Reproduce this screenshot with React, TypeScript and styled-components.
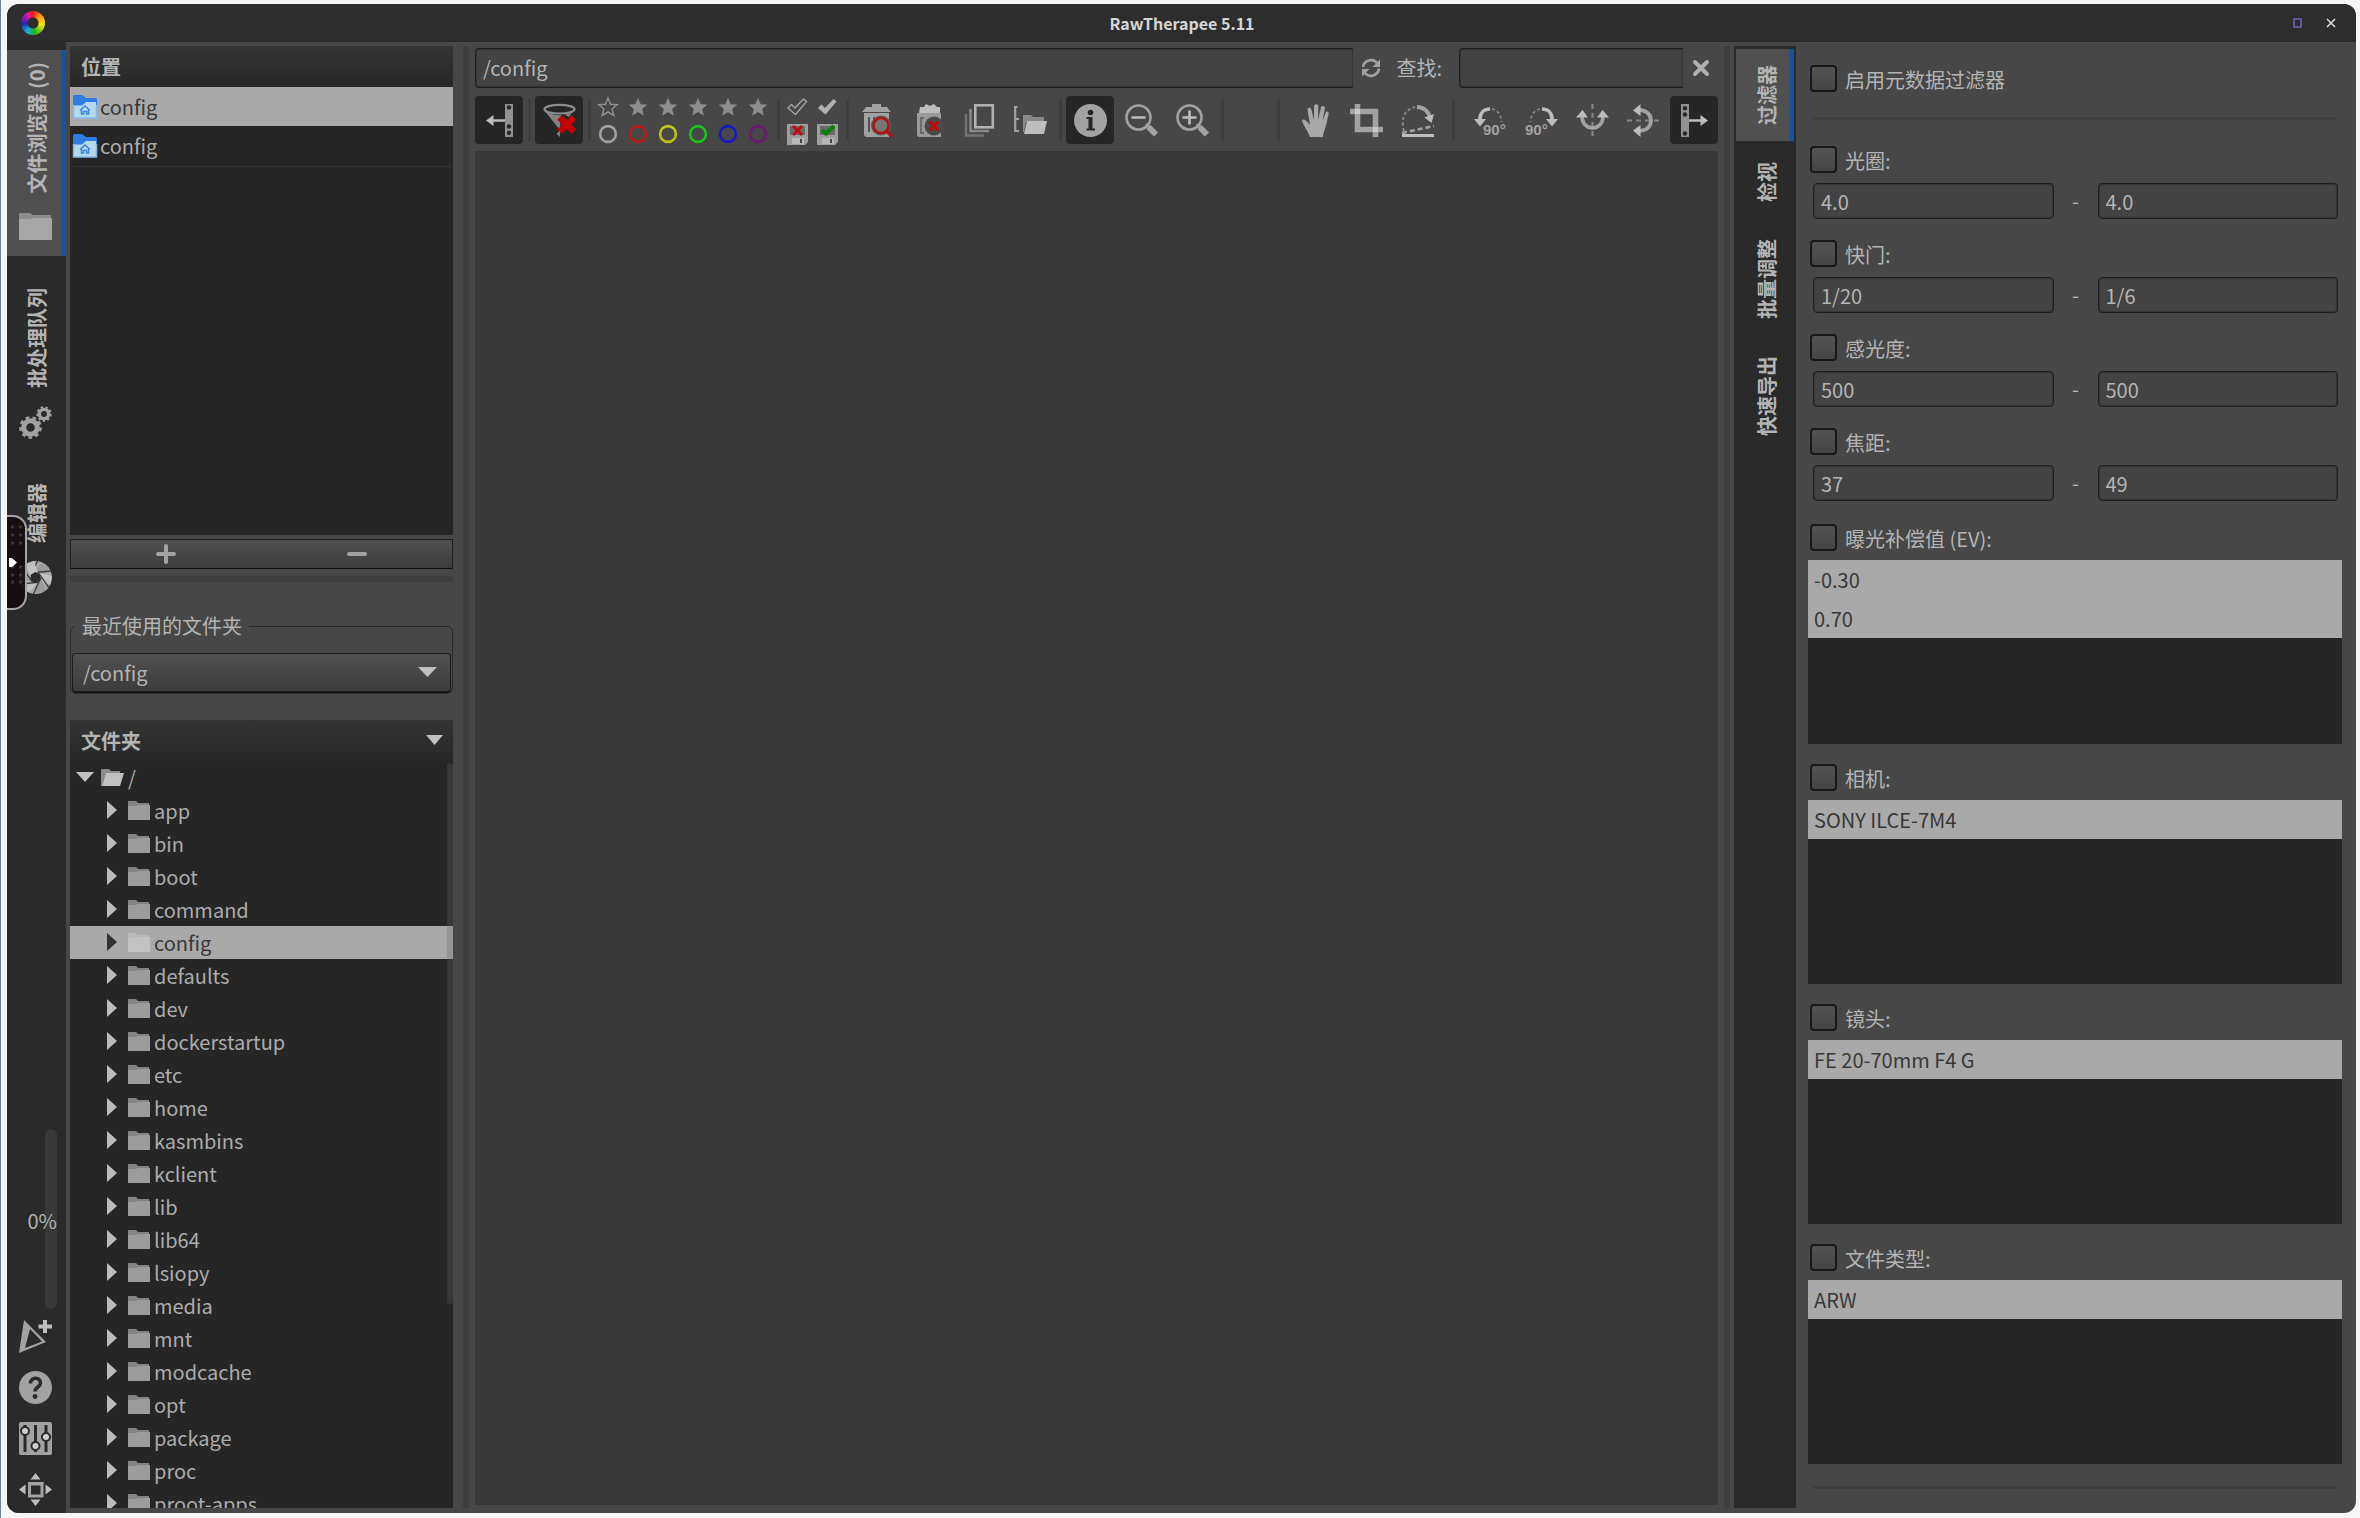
import React from "react";
import styled, { createGlobalStyle, css } from "styled-components";

const GlobalStyle = createGlobalStyle`
  * { box-sizing: border-box; }
  html, body, #root { height: 100%; }
  body {
    margin: 0;
    background: #f6f6f7;
    color: #b4b4b4;
    font: 20px/30px "Noto Sans CJK SC", "Noto Sans", sans-serif;
  }
  button, input, select { font: inherit; color: inherit; }
  ul { margin: 0; padding: 0; list-style: none; }
`;

/* ---------- frame ---------- */

const Desktop = styled.div`
  height: 100vh;
  padding: 4px 4px 5px 6px;
  border-left: 1px solid #6f8296;
`;

const Window = styled.div`
  position: relative;
  height: 100%;
  display: flex;
  flex-direction: column;
  overflow: hidden;
  border-radius: 12px;
  background: #474747;
`;

const TitleBar = styled.header`
  display: grid;
  grid-template-columns: 1fr auto 1fr;
  align-items: center;
  flex: none;
  height: 38px;
  padding: 0 13px 0 14px;
  background: #2d2d2d;
  border-bottom: 1px solid #292929;
`;

const Title = styled.h1`
  margin: 0;
  font-size: 16px;
  line-height: 30px;
  font-weight: 700;
  color: #d6d6d6;
`;

const Wheel = styled.div`
  width: 24px;
  height: 24px;
  border-radius: 50%;
  background:
    radial-gradient(circle, #2d2d2d 5px, transparent 6px),
    conic-gradient(#f01818, #ff9a10 45deg, #f8e808 100deg, #20b418 170deg, #18b0e0 215deg, #2020b0 265deg, #9018b0 300deg, #e81898 330deg, #f01818);
`;

const WindowControls = styled.div`
  display: flex;
  justify-content: flex-end;
  gap: 10px;
`;

const WindowButton = styled.button`
  display: grid;
  place-items: center;
  width: 24px;
  height: 24px;
  padding: 0;
  border: 0;
  background: none;
`;

const Body = styled.div`
  flex: 1;
  min-height: 0;
  display: flex;
`;

/* ---------- left rail ---------- */

const Rail = styled.nav`
  display: flex;
  flex-direction: column;
  flex: none;
  width: 59px;
  padding: 8px 0 7px;
  background: #2a2a2a;
`;

const RailTabs = styled.div`
  display: flex;
  flex-direction: column;
  gap: 20px;
`;

const verticalText = css`
  writing-mode: vertical-rl;
  text-orientation: sideways;
  rotate: 180deg;
  font-weight: 700;
  white-space: nowrap;
`;

const RailTab = styled.button<{ $active?: boolean }>`
  display: flex;
  flex-direction: column;
  align-items: center;
  gap: 18px;
  padding: 12px 0 12px 3px;
  border: 0;
  border-right: 5px solid ${(p) => (p.$active ? "#15539e" : "transparent")};
  background: ${(p) => (p.$active ? "#505050" : "transparent")};
`;

const RailLabel = styled.span`
  ${verticalText}
  margin-left: 2px;
`;

const RailFoot = styled.div`
  display: flex;
  flex-direction: column;
  align-items: center;
  gap: 18px;
  margin-top: auto;
  padding-right: 2px;
`;

const Progress = styled.div`
  position: relative;
  align-self: flex-end;
  width: 12px;
  height: 180px;
  margin: 0 7px -7px 0;
  border-radius: 6px;
  background: #383838;
`;

const ProgressText = styled.span`
  position: absolute;
  right: 0;
  top: 77px;
`;

const IconButton = styled.button`
  display: grid;
  place-items: center;
  padding: 0;
  border: 0;
  background: none;
`;

const EdgeHandle = styled.button`
  position: absolute;
  left: 0;
  top: 511px;
  width: 20px;
  height: 95px;
  padding: 0;
  border: 2px solid #a8a4a4;
  border-left: 0;
  border-radius: 0 14px 14px 0;
  background: rgba(20, 14, 14, 0.94);
`;

/* ---------- left panel ---------- */

const SidePanel = styled.aside`
  display: flex;
  flex-direction: column;
  flex: none;
  width: 392px;
  padding: 4px 5px 5px 4px;
`;

const ListHeader = styled.div`
  display: flex;
  align-items: center;
  justify-content: space-between;
  flex: none;
  height: 41px;
  padding: 0 10px 0 11px;
  font-weight: 700;
  background: linear-gradient(#343434, #282828);
`;

const Places = styled.div`
  height: 489px;
  background: #262626;
`;

const PlaceRow = styled.li<{ $selected?: boolean }>`
  display: flex;
  align-items: center;
  gap: 3px;
  height: 39px;
  padding-left: 3px;
  color: ${(p) => (p.$selected ? "#383838" : "#acacac")};
  background: ${(p) => (p.$selected ? "#a9a9a9" : "transparent")};
`;

const PlacesLine = styled.hr`
  height: 1px;
  margin: 1px 2px 0 3px;
  border: 0;
  background: #343434;
`;

const ButtonPair = styled.div`
  display: grid;
  grid-template-columns: 1fr 1fr;
  height: 30px;
  margin-top: 4px;
  border: 1px solid #1f1f1f;
  border-bottom-color: #101010;
  background: linear-gradient(#505050, #3d3d3d);
`;

const PanedHandle = styled.div`
  flex: none;
  height: 6px;
  margin-top: 7px;
  background: #3e3e3e;
`;

const Recent = styled.fieldset`
  min-width: 0;
  margin: 29px 0 0;
  padding: 12px 1px 0;
  border: 1px solid #2a2a2a;
  border-radius: 6px;
`;

const RecentLegend = styled.legend`
  margin-left: 3px;
  padding: 0 7px;
`;

const SelectBox = styled.div`
  display: grid;
  grid-template-columns: 1fr 19px;
  align-items: center;
  height: 40px;
  border: 1px solid #1e1e1e;
  border-bottom: 2px solid #161616;
  border-radius: 4px;
  background: linear-gradient(#505050, #3c3c3c);
  padding-right: 13px;
`;

const Select = styled.select`
  grid-area: 1 / 1 / 2 / 3;
  appearance: none;
  height: 37px;
  padding: 0 10px;
  border: 0;
  outline: 0;
  background: none;
`;

const SelectArrow = styled.span`
  grid-area: 1 / 2;
  display: grid;
  pointer-events: none;
`;

const Tree = styled.div`
  position: relative;
  display: flex;
  flex-direction: column;
  flex: 1;
  min-height: 0;
  margin-top: 26px;
  overflow: hidden;
  background: #262626;
`;

const TreeRow = styled.li<{ $root?: boolean; $selected?: boolean }>`
  display: flex;
  align-items: center;
  height: 33px;
  gap: ${(p) => (p.$root ? "7px" : "11px")};
  padding-left: ${(p) => (p.$root ? "6px" : "37px")};
  color: ${(p) => (p.$selected ? "#383838" : "#acacac")};
  background: ${(p) => (p.$selected ? "#a9a9a9" : "transparent")};
`;

const TreeItem = styled.span`
  display: flex;
  align-items: center;
  gap: 4px;
`;

const ScrollThumb = styled.div`
  position: absolute;
  right: 0;
  top: 43px;
  width: 6px;
  height: 541px;
  border-radius: 3px;
  background: rgba(100, 100, 100, 0.28);
`;

const ColumnHandle = styled.div`
  flex: none;
  width: 6px;
  margin: 4px 5px 5px;
  background: #3e3e3e;
`;

/* ---------- centre ---------- */

const Center = styled.main`
  display: flex;
  flex-direction: column;
  flex: 1;
  min-width: 0;
  padding: 6px 1px 8px;
`;

const PathBar = styled.div`
  display: flex;
  align-items: center;
  height: 40px;
`;

const entry = css`
  min-width: 0;
  border: 1px solid #1e1e1e;
  outline: 0;
  background: #434343;
  box-shadow: inset 0 0 1px 1px #363636;
`;

const PathInput = styled.input`
  ${entry}
  flex: 1;
  height: 40px;
  padding: 0 7px 1px;
  border-right: 0;
  border-radius: 4px 0 0 4px;
`;

const SearchInput = styled(PathInput)`
  flex: none;
  width: 224px;
`;

const BarButton = styled(IconButton)`
  width: 35px;
  height: 36px;
`;

const SearchLabel = styled.label`
  padding: 0 17px 0 8px;
`;

const Toolbar = styled.div`
  display: flex;
  height: 48px;
  margin: 8px 0 7px;
`;

const ToolSeparator = styled.span<{ $wide?: boolean }>`
  width: 3px;
  margin: ${(p) => (p.$wide ? "3px 11px" : "3px 4px 3px 5px")};
  background: #3e3e3e;
`;

const ToolGap = styled.span`
  flex: 1;
`;

const ToolGroup = styled.div`
  display: flex;
  gap: 3px;
`;

const ToolButton = styled(IconButton)<{ $on?: boolean }>`
  width: 48px;
  height: 48px;
  border-radius: 4px;
  background: ${(p) => (p.$on ? "#262626" : "transparent")};
`;

const MiniGrid = styled.div<{ $columns: number }>`
  display: grid;
  grid-template-columns: repeat(${(p) => p.$columns}, 30px);
  grid-template-rows: 22px 32px;
  margin: 0 -1px 0 -2px;
`;

const Canvas = styled.section`
  flex: 1;
  background: #383838;
`;

/* ---------- right side ---------- */

const Strip = styled.nav`
  display: flex;
  flex-direction: column;
  gap: 5px;
  flex: none;
  width: 62px;
  margin: 4px 0 5px -1px;
  padding: 3px 2px 0;
  background: #2a2a2a;
`;

const StripTab = styled.button<{ $active?: boolean }>`
  display: grid;
  place-items: center;
  padding: 16px 0 16px 8px;
  border: 0;
  border-right: 5px solid ${(p) => (p.$active ? "#15539e" : "transparent")};
  background: ${(p) => (p.$active ? "#505050" : "transparent")};
`;

const StripLabel = styled.span`
  ${verticalText}
`;

const Filters = styled.aside`
  flex: none;
  width: 560px;
  padding: 23px 14px 0 12px;
`;

const CheckLabel = styled.label`
  display: flex;
  align-items: center;
  gap: 8px;
  height: 27px;
  padding-left: 2px;
`;

const MasterCheck = styled(CheckLabel)`
  margin-bottom: 25px;
`;

const CheckText = styled.span`
  padding-top: 2px;
`;

const Check = styled.input`
  appearance: none;
  width: 27px;
  height: 27px;
  margin: 0;
  border: 2px solid #181818;
  border-radius: 4px;
  background: linear-gradient(#535353, #454545);
`;

const Rule = styled.hr`
  height: 3px;
  margin: 22px 5px 26px;
  border: 0;
  background: #3f3f3f;
`;

const Ranges = styled.div`
  padding-bottom: 2px;
`;

const RangeGroup = styled.div`
  height: 94px;
`;

const Range = styled.div`
  display: grid;
  grid-template-columns: 1fr 44px 1fr;
  align-items: center;
  text-align: center;
  padding: 10px 4px 0 5px;
`;

const RangeInput = styled.input`
  ${entry}
  height: 36px;
  padding: 0 7px;
  border-radius: 4px;
`;

const ValueList = styled.ul`
  height: 184px;
  margin: 9px 0 20px;
  background: #262626;
`;

const Value = styled.li`
  height: 39px;
  padding: 5px 6px;
  line-height: 30px;
  color: #383838;
  background: #a9a9a9;
`;

/* ---------- icons ---------- */

const G = "#a2a2a2";
const L = "#bdbdbd";

const Svg = styled.svg`
  display: block;
  overflow: visible;
`;

type IconProps = { size?: number; w?: number; h?: number; children: React.ReactNode };
const Icon = ({ size = 33, w, h, children }: IconProps) => (
  <Svg width={w ?? size} height={h ?? size} viewBox={`0 0 ${w ?? size} ${h ?? size}`} fill="none" aria-hidden="true">
    {children}
  </Svg>
);

const Down = ({ w = 19 }: { w?: number }) => (
  <Icon w={w} h={11}>
    <path d={`M0 0H${w}L${w / 2} 10Z`} fill="#c0c0c0" />
  </Icon>
);

const Right = ({ dark }: { dark?: boolean }) => (
  <Icon w={10} h={19}>
    <path d="M0 0V18L10 9Z" fill={dark ? "#333" : "#bcbcbc"} />
  </Icon>
);

const Folder = ({ light }: { light?: boolean }) => (
  <Icon w={22} h={19}>
    <path d="M0 0H8L10 2H21V5H0Z" fill={light ? "#b8b8b8" : "#848484"} />
    <path d="M0 5H8L10 4H22V19H0Z" fill={light ? "#c2c2c2" : "#9c9c9c"} />
  </Icon>
);

const FolderOpen = () => (
  <Icon w={23} h={18}>
    <path d="M0 0H8L10 2H19V5H5L1 17H0Z" fill="#8a8a8a" />
    <path d="M5 4H23L19 17H1Z" fill="#c0c0c0" />
  </Icon>
);

const HomeFolder = () => (
  <Icon size={24}>
    <path d="M0 1.500Q0 0 1.500 0H9L13 3H22.500Q24 3 24 4.500V14H0Z" fill="#2f7de0" />
    <path d="M1 10.500H9L13 7H23V23H1Z" fill="#b4d9ec" />
    <path d="M0.500 10V23H23.500V10" stroke="#86b6ec" strokeWidth="1.500" />
    <path d="M7 15.500L12 11L17 15.500M8.500 14.500V19H10.500V16.500H13.500V19H15.500V14.500" stroke="#3f87dd" strokeWidth="1.500" />
  </Icon>
);

const BigFolder = () => (
  <Icon>
    <path d="M0 2H11L14 4H32V9H0Z" fill="#8c8c8c" />
    <path d="M0 8H11L14 7H33V29H0Z" fill="#a6a6a6" />
  </Icon>
);

const Gear = ({ cx, cy, r }: { cx: number; cy: number; r: number }) => (
  <g>
    <circle cx={cx} cy={cy} r={r * 0.62} stroke={G} strokeWidth={r * 0.46} />
    <circle cx={cx} cy={cy} r={r * 0.92} stroke={G} strokeWidth={r * 0.22} strokeDasharray={`${r * 0.34} ${r * 0.302}`} />
  </g>
);

const Gears = () => (
  <Icon>
    <Gear cx={11.5} cy={21.5} r={11} />
    <Gear cx={25} cy={8} r={7.5} />
  </Icon>
);

const Aperture = () => (
  <Icon>
    <circle cx="16.500" cy="16.500" r="16.500" fill="#a8a8a8" />
    {[0, 60, 120, 180, 240, 300].map((a) => (
      <g key={a} transform={`rotate(${a} 16.5 16.5)`}>
        <path d="M14 11.500L23 1.500L30 7L22 16Z" fill={a % 120 ? "#c2c2c2" : "#9b9b9b"} />
        <path d="M11 16.500L18.500 0" stroke="#3c3c3c" strokeWidth="1.300" />
      </g>
    ))}
    <path d="M16.500 11L21.300 13.800V19.200L16.500 22L11.700 19.200V13.800Z" fill="#2a2a2a" />
  </Icon>
);

const AddProfile = () => (
  <Icon>
    <path fillRule="evenodd" d="M5 0L27 22L0 33ZM11 9L6 28L23 21.500Z" fill={G} />
    <path d="M26 0V13M19.500 6.500H33" stroke={L} strokeWidth="4" />
  </Icon>
);

const Help = () => (
  <Icon>
    <circle cx="16.500" cy="16.500" r="16.500" fill={G} />
    <path d="M11.500 12.500C11.500 5.500 21.500 5.500 21.500 12C21.500 16 16 16 16 20.500" stroke="#2a2a2a" strokeWidth="3.600" />
    <circle cx="16" cy="25.500" r="2.400" fill="#2a2a2a" />
  </Icon>
);

const Sliders = () => (
  <Icon>
    <rect width="33" height="33" rx="2" fill={G} />
    <path d="M6 3V30M16.500 3V30M27 3V30" stroke="#2a2a2a" strokeWidth="3" />
    {[[6, 9], [16.5, 24], [27, 15]].map(([x, y]) => (
      <circle key={x} cx={x} cy={y} r="4" fill="#cfcfcf" stroke="#2a2a2a" strokeWidth="2" />
    ))}
  </Icon>
);

const Fullscreen = () => (
  <Icon>
    <path d="M11.500 6.500L16.500 0L21.500 6.500ZM11.500 26.500L16.500 33L21.500 26.500ZM6.500 11.500L0 16.500L6.500 21.500ZM26.500 11.500L33 16.500L26.500 21.500Z" fill={L} />
    <rect x="10.500" y="11" width="12.500" height="12" stroke={G} strokeWidth="3" />
    <path d="M9 10.500H24.500" stroke={G} strokeWidth="3" />
  </Icon>
);

const PanelToggle = ({ right }: { right?: boolean }) => (
  <Icon>
    <g transform={right ? "rotate(180 16.5 16.5)" : undefined}>
      <rect x="22" y="0" width="8" height="33" fill="#909090" />
      <circle cx="26" cy="3.500" r="2.200" fill="#262626" />
      <circle cx="26" cy="22.500" r="2.200" fill="#262626" />
      <circle cx="26" cy="28.800" r="2.200" fill="#262626" />
      <path d="M10 16.500H22" stroke={L} strokeWidth="2.600" />
      <path d="M3 16.500L10.500 11V22Z" fill={L} />
    </g>
  </Icon>
);

const FilterClear = () => (
  <Icon>
    <path d="M0 5Q8 12 18 11L17 26ZM22 11L30 7L26 13ZM13.500 30L17 26V33Z" fill="#828282" />
    <ellipse cx="16.500" cy="5.200" rx="15" ry="4.300" fill="#262626" stroke="#8c8c8c" strokeWidth="2.200" />
    <path d="M16.500 13.500L31 27.500M31 13.500L16.500 27.500" stroke="#c60000" strokeWidth="6.500" />
  </Icon>
);

const starPath = "M10 1L12.600 7.200L19 7.700L14.100 12L15.700 18.500L10 15L4.300 18.500L5.900 12L1 7.700L7.400 7.200Z";
const Star = ({ outline }: { outline?: boolean }) => (
  <Icon size={20}>
    <path d={starPath} fill={outline ? "none" : "#8e8e8e"} stroke="#8e8e8e" strokeWidth={outline ? 1.5 : 0.2} />
  </Icon>
);

const Ring = ({ color }: { color: string }) => (
  <Icon size={20}>
    <circle cx="10" cy="10" r="7.900" stroke={color} strokeWidth="2.600" />
  </Icon>
);

const Tick = ({ outline }: { outline?: boolean }) => (
  <Icon size={20}>
    <path
      d="M1 11L4.500 7.500L8 11L16.500 2L19.500 4.500L8.500 17.500Z"
      fill={outline ? "none" : "#b0b0b0"}
      stroke="#a2a2a2"
      strokeWidth={outline ? 1.4 : 0.2}
    />
  </Icon>
);

const Floppy = ({ yes }: { yes?: boolean }) => (
  <Icon size={21}>
    <path d="M0 0H21V18L18 21H0Z" fill="#9e9e9e" />
    <path d="M3 2H18V11H3Z" fill="#6a6a6a" />
    <path d="M5 14H17V20H5Z" fill="#b8b8b8" />
    <path d="M13 15H15V19H13Z" fill="#474747" />
    {yes ? (
      <path d="M5 6L9 9.500L17 2" stroke="#0b7d0b" strokeWidth="4" />
    ) : (
      <path d="M6 2L15 11M15 2L6 11" stroke="#b81010" strokeWidth="3" />
    )}
  </Icon>
);

const TrashSearch = () => (
  <Icon>
    <path d="M11 0H20V3H26L30 8H1L5 3H11Z" fill={G} />
    <path d="M3 9H28V33H6Q3 33 3 30Z" fill={G} />
    <path d="M8 13V28M13 13V28" stroke="#555" strokeWidth="2" />
    <circle cx="20" cy="21.500" r="10" fill="#5c5c5c" />
    <circle cx="20" cy="21.500" r="7.500" fill="#777" stroke="#b51212" strokeWidth="2.600" />
    <path d="M25 27L31 32.500" stroke="#b51212" strokeWidth="3.200" />
  </Icon>
);

const TrashDelete = () => (
  <Icon>
    <path d="M7 9L8 3L12 3L14 0L18 2L22 0L25 3L28 3V9Z" fill={L} />
    <path d="M5 9H29V33H8Q5 33 5 30Z" fill="#999" />
    <path d="M12 14H9V29H12" stroke="#666" strokeWidth="1.800" />
    <circle cx="22" cy="22" r="9.500" fill="#4b4b4b" />
    <path d="M17.500 17.500L26.500 26.500M26.500 17.500L17.500 26.500" stroke="#c40808" strokeWidth="3" />
  </Icon>
);

const Copies = () => (
  <Icon>
    <path d="M3 10V31.500H21" stroke="#747474" strokeWidth="2.400" />
    <path d="M7.500 5V27H26" stroke="#8a8a8a" strokeWidth="2.400" />
    <rect x="12.300" y="1.300" width="17.500" height="22" stroke="#b0b0b0" strokeWidth="2.600" />
  </Icon>
);

const FolderTree = () => (
  <Icon>
    <path d="M3.500 3H1.200V27H5M1.500 15H5" stroke={G} strokeWidth="2.200" />
    <path d="M9 11H17L19 13H30V18H12L10 28H9Z" fill="#8a8a8a" />
    <path d="M13 17H33L30 30H10Z" fill={L} />
  </Icon>
);

const Info = () => (
  <Icon>
    <circle cx="16.500" cy="16.500" r="16.500" fill={G} />
    <circle cx="16.500" cy="8.500" r="2.800" fill="#262626" />
    <path d="M12.500 13H18.500V24.500H21V26.500H12.500V24.500H14.500V15H12.500Z" fill="#262626" />
  </Icon>
);

const Zoom = ({ plus }: { plus?: boolean }) => (
  <Icon>
    <path d="M21 20L25 24" stroke={G} strokeWidth="3" />
    <path d="M23.500 23L31 30.500" stroke={G} strokeWidth="6" />
    <circle cx="13.500" cy="13.500" r="12" stroke={G} strokeWidth="2.600" />
    <path d={plus ? "M6.500 13.500H20.500M13.500 6.500V20.500" : "M6.500 13.500H20.500"} stroke={L} strokeWidth="2.600" />
  </Icon>
);

const Hand = () => (
  <Icon>
    <path d="M11 33C9 27 5 23 3 17C4 14 7 16 11 21L8.500 6C9 2.500 12 3 12.500 6L15 16L15 2C16 -0.500 19 0 19.300 2L19 16L22 3.500C23 1 26.300 2 25.800 4.500L23.500 17L26.500 9C27.500 6.500 30.300 7.500 29.600 10C28 17 27 22 25.500 26C24.500 29 24 31 24 33Z" fill="#a8a8a8" />
  </Icon>
);

const Crop = () => (
  <Icon>
    <path d="M7.500 0V25.500H33" stroke={G} strokeWidth="5.600" />
    <path d="M0 7.500H25.500V33" stroke={G} strokeWidth="5.600" />
    <path d="M5 5H10V10H5ZM23 23H28V28H23Z" fill="#cacaca" />
  </Icon>
);

const Straighten = () => (
  <Icon>
    <path d="M1 31.500H33" stroke={L} strokeWidth="3" />
    <path d="M1 29L33 22" stroke={G} strokeWidth="2.600" strokeDasharray="5 3" />
    <path d="M3 27C-1 13 5 5 14 3" stroke="#8a8a8a" strokeWidth="2" strokeDasharray="3 2.500" />
    <path d="M16 3C23 3 28 8 29 14" stroke={G} strokeWidth="4" />
    <path d="M23.500 13.500L33 10L30.500 19Z" fill={L} />
  </Icon>
);

const Rotate90 = ({ right }: { right?: boolean }) => (
  <Icon>
    <g transform={right ? "translate(33 0) scale(-1 1)" : undefined}>
      <path d="M16 5C10 5 6 9 6 15" stroke={L} strokeWidth="3.600" />
      <path d="M0 15H12L6 22.500Z" fill={L} />
      <path d="M18 5C24 6 27 11 27.500 18" stroke="#858585" strokeWidth="1.800" strokeDasharray="3 2.500" />
    </g>
    <text x={right ? 0 : 9} y="31" fontSize="15" fontWeight="700" fontFamily="Liberation Sans, sans-serif" fill={G}>
      90°
    </text>
  </Icon>
);

const MirrorArc = () => (
  <>
    <path d="M16.500 0V33" stroke="#858585" strokeWidth="2.200" strokeDasharray="5 4" />
    <path d="M6 12C6 28 27 28 27 12" stroke={G} strokeWidth="3.800" />
    <path d="M0 13.500L6.500 6L12 13.500ZM21 13.500L26.500 6L33 13.500Z" fill={L} />
  </>
);

const FlipH = () => (
  <Icon>
    <MirrorArc />
  </Icon>
);

const FlipV = () => (
  <Icon>
    <g transform="rotate(-90 16.5 16.5)">
      <MirrorArc />
    </g>
  </Icon>
);

const Refresh = () => (
  <Icon size={20}>
    <path d="M2 9C3 2 12 0 16 5M18 10.500C17 18 8 20 4 15" stroke={G} strokeWidth="2.600" />
    <path d="M19 1.500V9H11.500ZM1 18.500V11H8.500Z" fill={G} />
  </Icon>
);

/* ---------- data ---------- */

const folders = [
  "app", "bin", "boot", "command", "config", "defaults", "dev", "dockerstartup", "etc", "home", "kasmbins",
  "kclient", "lib", "lib64", "lsiopy", "media", "mnt", "modcache", "opt", "package", "proc", "proot-apps",
];
const ringColors: [string, string][] = [
  ["无", "#a0a0a0"], ["红", "#bf1a1a"], ["黄", "#c2c214"], ["绿", "#18c218"], ["蓝", "#1717c0"], ["紫", "#6f186f"],
];
const ranges = [
  ["光圈:", "4.0", "4.0"],
  ["快门:", "1/20", "1/6"],
  ["感光度:", "500", "500"],
  ["焦距:", "37", "49"],
];
const lists: [string, string[]][] = [
  ["曝光补偿值 (EV):", ["-0.30", "0.70"]],
  ["相机:", ["SONY ILCE-7M4"]],
  ["镜头:", ["FE 20-70mm F4 G"]],
  ["文件类型:", ["ARW"]],
];

export default function App() {
  return (
    <Desktop>
      <GlobalStyle />
      <Window>
        <TitleBar>
          <Wheel />
          <Title>RawTherapee 5.11</Title>
          <WindowControls>
            <WindowButton aria-label="最大化">
              <Icon w={9} h={10}><path d="M1 1H8V9H1Z" stroke="#6a62b8" strokeWidth="1.600" /></Icon>
            </WindowButton>
            <WindowButton aria-label="关闭">
              <Icon size={10}><path d="M1 1L9 9M9 1L1 9" stroke="#dedede" strokeWidth="1.500" /></Icon>
            </WindowButton>
          </WindowControls>
        </TitleBar>

        <Body>
          <Rail>
            <RailTabs>
              <RailTab $active><RailLabel>文件浏览器 (0)</RailLabel><BigFolder /></RailTab>
              <RailTab><RailLabel>批处理队列</RailLabel><Gears /></RailTab>
              <RailTab><RailLabel>编辑器</RailLabel><Aperture /></RailTab>
            </RailTabs>
            <RailFoot>
              <Progress role="progressbar" aria-valuenow={0}>
                <ProgressText>0%</ProgressText>
              </Progress>
              <IconButton aria-label="添加配置"><AddProfile /></IconButton>
              <IconButton aria-label="帮助"><Help /></IconButton>
              <IconButton aria-label="首选项"><Sliders /></IconButton>
              <IconButton aria-label="全屏"><Fullscreen /></IconButton>
            </RailFoot>
          </Rail>

          <SidePanel>
            <Places>
              <ListHeader>位置</ListHeader>
              <ul>
                <PlaceRow $selected><HomeFolder />config</PlaceRow>
                <PlaceRow><HomeFolder />config</PlaceRow>
              </ul>
              <PlacesLine />
            </Places>
            <ButtonPair>
              <IconButton aria-label="添加">
                <Icon size={20}><path d="M10 2V18M2 10H18" stroke={G} strokeWidth="4" strokeLinecap="round" /></Icon>
              </IconButton>
              <IconButton aria-label="移除">
                <Icon size={20}><path d="M2 10H18" stroke={G} strokeWidth="4" strokeLinecap="round" /></Icon>
              </IconButton>
            </ButtonPair>
            <PanedHandle />
            <Recent>
              <RecentLegend>最近使用的文件夹</RecentLegend>
              <SelectBox>
                <Select aria-label="最近使用的文件夹"><option>/config</option></Select>
                <SelectArrow><Down /></SelectArrow>
              </SelectBox>
            </Recent>
            <Tree>
              <ListHeader>文件夹<Down w={17} /></ListHeader>
              <ul>
                <TreeRow $root><Down w={18} /><TreeItem><FolderOpen />/</TreeItem></TreeRow>
                {folders.map((name) => {
                  const on = name === "config";
                  return (
                    <TreeRow key={name} $selected={on}>
                      <Right dark={on} />
                      <TreeItem><Folder light={on} />{name}</TreeItem>
                    </TreeRow>
                  );
                })}
              </ul>
              <ScrollThumb />
            </Tree>
          </SidePanel>

          <ColumnHandle />

          <Center>
            <PathBar>
              <PathInput aria-label="路径" defaultValue="/config" />
              <BarButton aria-label="刷新"><Refresh /></BarButton>
              <SearchLabel htmlFor="find">查找:</SearchLabel>
              <SearchInput id="find" />
              <BarButton aria-label="清除">
                <Icon size={18}><path d="M3 3L15 15M15 3L3 15" stroke="#b0b0b0" strokeWidth="4" strokeLinecap="round" /></Icon>
              </BarButton>
            </PathBar>
            <Toolbar>
              <ToolButton $on aria-label="左侧面板"><PanelToggle /></ToolButton>
              <ToolSeparator />
              <ToolButton $on aria-label="清除过滤"><FilterClear /></ToolButton>
              <ToolSeparator />
              <MiniGrid $columns={6}>
                {[0, 1, 2, 3, 4, 5].map((n) => (
                  <IconButton key={n} aria-label={`${n} 星`}><Star outline={n === 0} /></IconButton>
                ))}
                {ringColors.map(([name, color]) => (
                  <IconButton key={name} aria-label={name}><Ring color={color} /></IconButton>
                ))}
              </MiniGrid>
              <ToolSeparator />
              <MiniGrid $columns={2}>
                <IconButton aria-label="未编辑"><Tick outline /></IconButton>
                <IconButton aria-label="已编辑"><Tick /></IconButton>
                <IconButton aria-label="未保存"><Floppy /></IconButton>
                <IconButton aria-label="已保存"><Floppy yes /></IconButton>
              </MiniGrid>
              <ToolSeparator />
              <ToolGroup>
                <ToolButton aria-label="显示回收站"><TrashSearch /></ToolButton>
                <ToolButton aria-label="清空回收站"><TrashDelete /></ToolButton>
                <ToolButton aria-label="原片"><Copies /></ToolButton>
                <ToolButton aria-label="子文件夹"><FolderTree /></ToolButton>
              </ToolGroup>
              <ToolSeparator />
              <ToolGroup>
                <ToolButton $on aria-label="信息"><Info /></ToolButton>
                <ToolButton aria-label="缩小"><Zoom /></ToolButton>
                <ToolButton aria-label="放大"><Zoom plus /></ToolButton>
              </ToolGroup>
              <ToolSeparator />
              <ToolGap />
              <ToolSeparator $wide />
              <ToolGroup>
                <ToolButton aria-label="抓手"><Hand /></ToolButton>
                <ToolButton aria-label="裁剪"><Crop /></ToolButton>
                <ToolButton aria-label="拉直"><Straighten /></ToolButton>
              </ToolGroup>
              <ToolSeparator $wide />
              <ToolGroup>
                <ToolButton aria-label="左转"><Rotate90 /></ToolButton>
                <ToolButton aria-label="右转"><Rotate90 right /></ToolButton>
                <ToolButton aria-label="水平翻转"><FlipH /></ToolButton>
                <ToolButton aria-label="垂直翻转"><FlipV /></ToolButton>
                <ToolButton $on aria-label="右侧面板"><PanelToggle right /></ToolButton>
              </ToolGroup>
            </Toolbar>
            <Canvas />
          </Center>

          <ColumnHandle />

          <Strip>
            <StripTab $active><StripLabel>过滤器</StripLabel></StripTab>
            <StripTab><StripLabel>检视</StripLabel></StripTab>
            <StripTab><StripLabel>批量调整</StripLabel></StripTab>
            <StripTab><StripLabel>快速导出</StripLabel></StripTab>
          </Strip>

          <Filters>
            <MasterCheck><Check type="checkbox" /><CheckText>启用元数据过滤器</CheckText></MasterCheck>
            <Rule />
            <Ranges>
              {ranges.map(([label, from, to]) => (
                <RangeGroup key={label}>
                  <CheckLabel><Check type="checkbox" /><CheckText>{label}</CheckText></CheckLabel>
                  <Range>
                    <RangeInput aria-label={`${label} 最小`} defaultValue={from} />-
                    <RangeInput aria-label={`${label} 最大`} defaultValue={to} />
                  </Range>
                </RangeGroup>
              ))}
            </Ranges>
            {lists.map(([label, values]) => (
              <div key={label}>
                <CheckLabel><Check type="checkbox" /><CheckText>{label}</CheckText></CheckLabel>
                <ValueList>
                  {values.map((v) => <Value key={v}>{v}</Value>)}
                </ValueList>
              </div>
            ))}
            <Rule />
          </Filters>
        </Body>

        <EdgeHandle aria-label="展开控制栏">
          <Icon w={18} h={91}>
            {[10, 18, 26, 50, 58, 65].map((y) => (
              <path key={y} d={`M4 ${y}H7M12 ${y}H15`} stroke="#3a3434" strokeWidth="3" />
            ))}
            <path d="M2 41H5L10 45.500L5 50H2Z" fill="#fff" />
          </Icon>
        </EdgeHandle>
      </Window>
    </Desktop>
  );
}
